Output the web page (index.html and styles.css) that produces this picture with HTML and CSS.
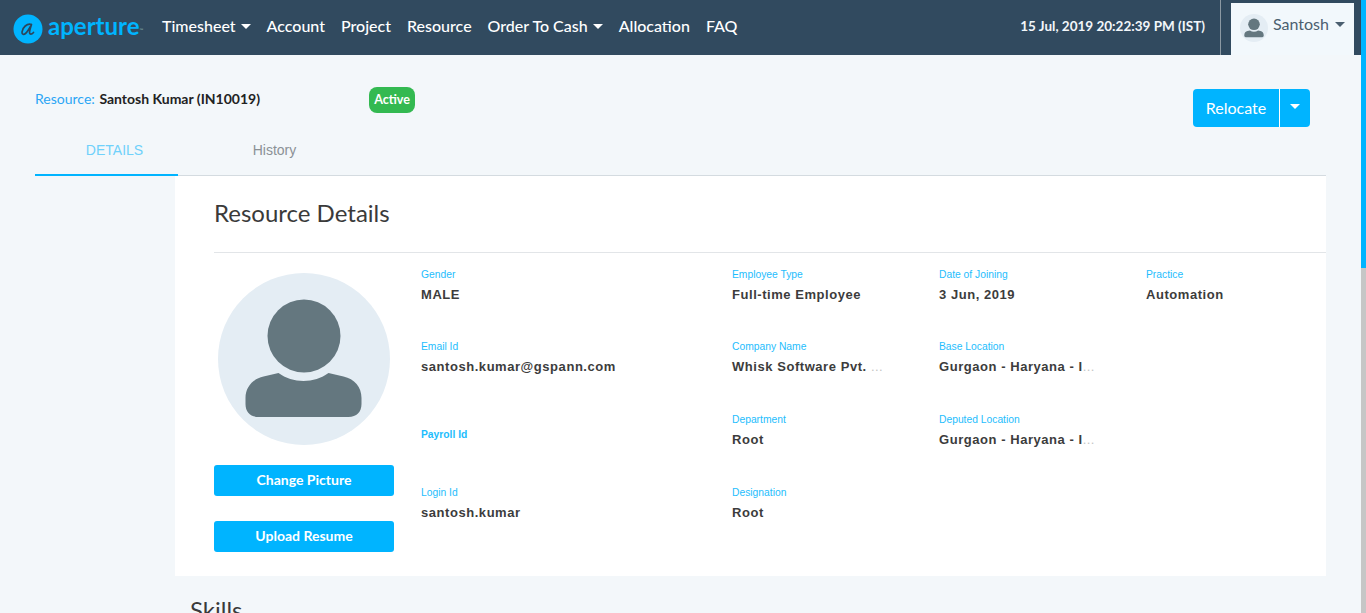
FILE: index.html

```html
<!DOCTYPE html>
<html lang="en">
<head>
  <meta charset="UTF-8" />
  <title>Aperture - Resource Details</title>
  <link rel="stylesheet" href="styles.css">
</head>
<body>
  <header class="topbar">
    <a class="logo" href="#">
      <svg class="logo-mark" viewBox="0 0 30 30" width="30" height="30">
        <circle cx="15" cy="15" r="14.500" fill="#00b4ff"/>
        <path d="M18.500 10.500C14 9 9.500 13.500 9 18c-.2 2.500 1.800 3 3.500 1.500 2.500-2.200 4.300-6 6-9-1 3-2 6-2 8s2 2.300 4 0" fill="none" stroke="#2b465c" stroke-width="1.700" stroke-linecap="round" stroke-linejoin="round"/>
      </svg>
      <span class="logo-text">aperture</span><span class="logo-tm">™</span>
    </a>
    <nav class="main-nav">
      <a href="#" class="caret-link">Timesheet</a>
      <a href="#">Account</a>
      <a href="#">Project</a>
      <a href="#">Resource</a>
      <a href="#" class="caret-link">Order To Cash</a>
      <a href="#">Allocation</a>
      <a href="#">FAQ</a>
    </nav>
    <div class="clock">15 Jul, 2019 20:22:39 PM (IST)</div>
    <div class="user-menu">
      <span class="user-avatar">
        <svg viewBox="0 0 28 28" width="28" height="28">
          <circle cx="14" cy="14" r="14" fill="#e4edf4"/>
          <circle cx="14" cy="10.300" r="5.800" fill="#64777f"/>
          <path d="M4.300 21c0-2.300 1.400-3.500 3.200-3.900l2.400-.6c2.400 1.700 5.800 1.700 8.200 0l2.400.6c1.800.4 3.200 1.600 3.200 3.900v.8c0 .9-.7 1.400-1.400 1.400H5.700c-.7 0-1.400-.5-1.400-1.400z" fill="#64777f"/>
        </svg>
      </span>
      <span class="user-name caret-link">Santosh</span>
    </div>
  </header>

  <main class="page">
    <div class="title-row">
      <div class="resource-title"><span>Resource:</span> <strong>Santosh Kumar (IN10019)</strong></div>
      <span class="badge-active">Active</span>
      <div class="split-btn">
        <button type="button" class="split-main">Relocate</button>
        <button type="button" class="split-caret" aria-label="More"></button>
      </div>
    </div>

    <div class="tabs">
      <a href="#" class="tab tab-active">DETAILS</a>
      <a href="#" class="tab">History</a>
    </div>

    <section class="card">
      <h2>Resource Details</h2>
      <div class="card-body">
        <div class="photo-col">
          <svg class="photo" viewBox="0 0 172 172" width="172" height="172">
            <circle cx="86" cy="86" r="86" fill="#e4edf4"/>
            <circle cx="86" cy="63" r="36.500" fill="#64777f"/>
            <path d="M27.500 125c0-11 7-19 18-21.500l15-3.500c14 10.500 36 10.500 50 0l15 3.500c11 2.500 18 10.500 18 21.500v6c0 8-5 13-13 13h-90c-8 0-13-5-13-13z" fill="#64777f"/>
          </svg>
          <button type="button" class="btn">Change Picture</button>
          <button type="button" class="btn">Upload Resume</button>
        </div>
        <div class="fields">
          <div class="field"><label>Gender</label><p>MALE</p></div>
          <div class="field"><label>Employee Type</label><p>Full-time Employee</p></div>
          <div class="field"><label>Date of Joining</label><p>3 Jun, 2019</p></div>
          <div class="field"><label>Practice</label><p>Automation</p></div>

          <div class="field"><label>Email Id</label><p>santosh.kumar@gspann.com</p></div>
          <div class="field"><label>Company Name</label><p>Whisk Software Pvt. <span class="ell">...</span></p></div>
          <div class="field"><label>Base Location</label><p>Gurgaon - Haryana - I<span class="ell">...</span></p></div>
          <div class="field"></div>

          <div class="field field-empty"><label>Payroll Id</label></div>
          <div class="field"><label>Department</label><p>Root</p></div>
          <div class="field"><label>Deputed Location</label><p>Gurgaon - Haryana - I<span class="ell">...</span></p></div>
          <div class="field"></div>

          <div class="field"><label>Login Id</label><p>santosh.kumar</p></div>
          <div class="field"><label>Designation</label><p>Root</p></div>
        </div>
      </div>
    </section>

    <h2 class="skills">Skills</h2>
  </main>

  <div class="scroll-track"><div class="scroll-thumb"></div></div>
</body>
</html>
```

FILE: styles.css

```css
html, body {
  height: 613px;
  overflow: hidden;
}
body {
  font-family: 'Lato', 'Liberation Sans', sans-serif;
  background-color: #f3f7fa;
  margin: 0;
  padding: 0;
  color: #333;
}
a {
  text-decoration: none;
}
button {
  font-family: inherit;
  cursor: pointer;
  border: none;
}

/* top bar */
.topbar {
  background-color: #314a5f;
  height: 55px;
  display: flex;
  align-items: center;
  padding-left: 13px;
}
.logo {
  display: flex;
  align-items: center;
  width: 149px;
  flex: none;
}
.logo-mark {
  flex: none;
  margin-top: 2px;
}
.logo-text {
  color: #00b4ff;
  font-family: 'Lato', sans-serif;
  font-size: 24px;
  font-weight: 700;
  margin-left: 5px;
  margin-top: -4px;
}
.logo-tm {
  color: #8aa;
  font-size: 5px;
  align-self: flex-start;
  margin-top: 15px;
}
.main-nav {
  display: flex;
  gap: 16px;
  flex: 1;
  margin-top: -5px;
}
.main-nav a {
  color: #fff;
  font-size: 16px;
  font-weight: 500;
}
.caret-link::after {
  content: "";
  display: inline-block;
  border-top: 5px solid currentColor;
  border-left: 5px solid transparent;
  border-right: 5px solid transparent;
  margin-left: 5px;
  vertical-align: 3px;
}
.clock {
  color: #f2f6fa;
  font-size: 13.500px;
  font-weight: 700;
  padding-right: 15px;
  border-right: 1px solid #8c99a3;
  height: 55px;
  line-height: 52px;
}
.user-menu {
  background-color: #f2f8fc;
  width: 123px;
  height: 52px;
  margin: 3px 12px 0 10px;
  display: flex;
  align-items: center;
  padding-left: 9px;
  box-sizing: border-box;
  align-self: flex-start;
}
.user-avatar {
  display: flex;
  margin-right: 5px;
  margin-top: -3px;
}
.user-name {
  color: #4b5f70;
  font-size: 16px;
  margin-top: -11px;
}
.user-name::after {
  margin-left: 6px;
}

/* page heading */
.page {
  padding: 0 40px 0 35px;
}
.title-row {
  display: flex;
  align-items: flex-start;
  height: 83px;
  padding-top: 32px;
  box-sizing: border-box;
}
.resource-title {
  font-size: 14px;
  width: 334px;
  margin-top: 3px;
}
.resource-title span {
  color: #2ba6f5;
}
.resource-title strong {
  color: #222;
  font-weight: 700;
  margin-left: 1px;
}
.badge-active {
  background-color: #33b951;
  color: #fff;
  font-size: 12.500px;
  font-weight: 700;
  border-radius: 8px;
  width: 46px;
  height: 26px;
  line-height: 25px;
  text-align: center;
}
.split-btn {
  margin-left: auto;
  margin-right: 16px;
  margin-top: 2px;
  display: flex;
  height: 38px;
}
.split-btn button {
  background-color: #00b4ff;
  color: #fff;
}
.split-main {
  width: 87px;
  padding: 0 0 2px;
  font-size: 16px;
  border-radius: 4px 0 0 4px;
  border-right: 1px solid #fff !important;
}
.split-caret {
  width: 30px;
  border-radius: 0 4px 4px 0;
}
.split-caret::after {
  content: "";
  display: block;
  margin: -3px auto 0;
  width: 0;
  border-top: 5px solid #fff;
  border-left: 5px solid transparent;
  border-right: 5px solid transparent;
}

/* tabs */
.tabs {
  display: flex;
  border-bottom: 1px solid #d4dbe0;
  height: 37px;
}
.tab {
  width: 193px;
  height: 37px;
  box-sizing: border-box;
  text-align: center;
  font-family: 'Liberation Sans', sans-serif;
  font-size: 14px;
  line-height: 24px;
  color: #8b9196;
}
.tab-active {
  width: 143px;
  padding-left: 16px;
  color: #6fd1fb;
  border-bottom: 2px solid #00b4ff;
  height: 38px;
}

/* details card */
.card {
  background-color: #fff;
  margin-left: 140px;
  padding-left: 39px;
  height: 400px;
}
.card h2 {
  margin: 0;
  height: 77px;
  line-height: 73px;
  font-size: 24px;
  font-weight: 400;
  color: #3a3a3a;
  border-bottom: 1px solid #e2e5e8;
  box-sizing: border-box;
}
.card-body {
  display: flex;
}
.photo-col {
  width: 180px;
  margin-right: 27px;
  display: flex;
  flex-direction: column;
  align-items: center;
}
.photo {
  margin-top: 20px;
  margin-bottom: 20px;
}
.btn {
  width: 180px;
  height: 31px;
  padding: 0 0 2px;
  background-color: #00b4ff;
  color: #fff;
  font-size: 14px;
  font-weight: 700;
  border-radius: 3px;
  margin-bottom: 25px;
}
.fields {
  display: grid;
  grid-template-columns: 311px 207px 207px 180px;
  grid-template-rows: 72px 73px 73px 73px;
  padding-top: 15px;
  flex: 1;
}
.field label {
  display: block;
  font-family: 'Liberation Sans', sans-serif;
  color: #1ebdfd;
  font-size: 10.300px;
  line-height: 13px;
}
.field p {
  margin: 5px 0 0;
  font-family: 'Liberation Sans', sans-serif;
  font-size: 13px;
  font-weight: 700;
  line-height: 18px;
  color: #3c3c3c;
  letter-spacing: 0.550px;
  white-space: nowrap;
}
.ell {
  font-weight: 400;
  color: #c4c4c4;
  letter-spacing: 0.400px;
}
.field-empty label {
  padding-top: 15px;
  font-weight: 700;
}

.skills {
  margin: 19px 0 0 155px;
  font-size: 24px;
  font-weight: 400;
  color: #3a3a3a;
}

/* thin page scrollbar */
.scroll-track {
  position: fixed;
  top: 0;
  right: 0;
  bottom: 0;
  width: 5px;
  background-color: #c6c6c6;
}
.scroll-thumb {
  height: 268px;
  background-color: #00b4ff;
}
```
